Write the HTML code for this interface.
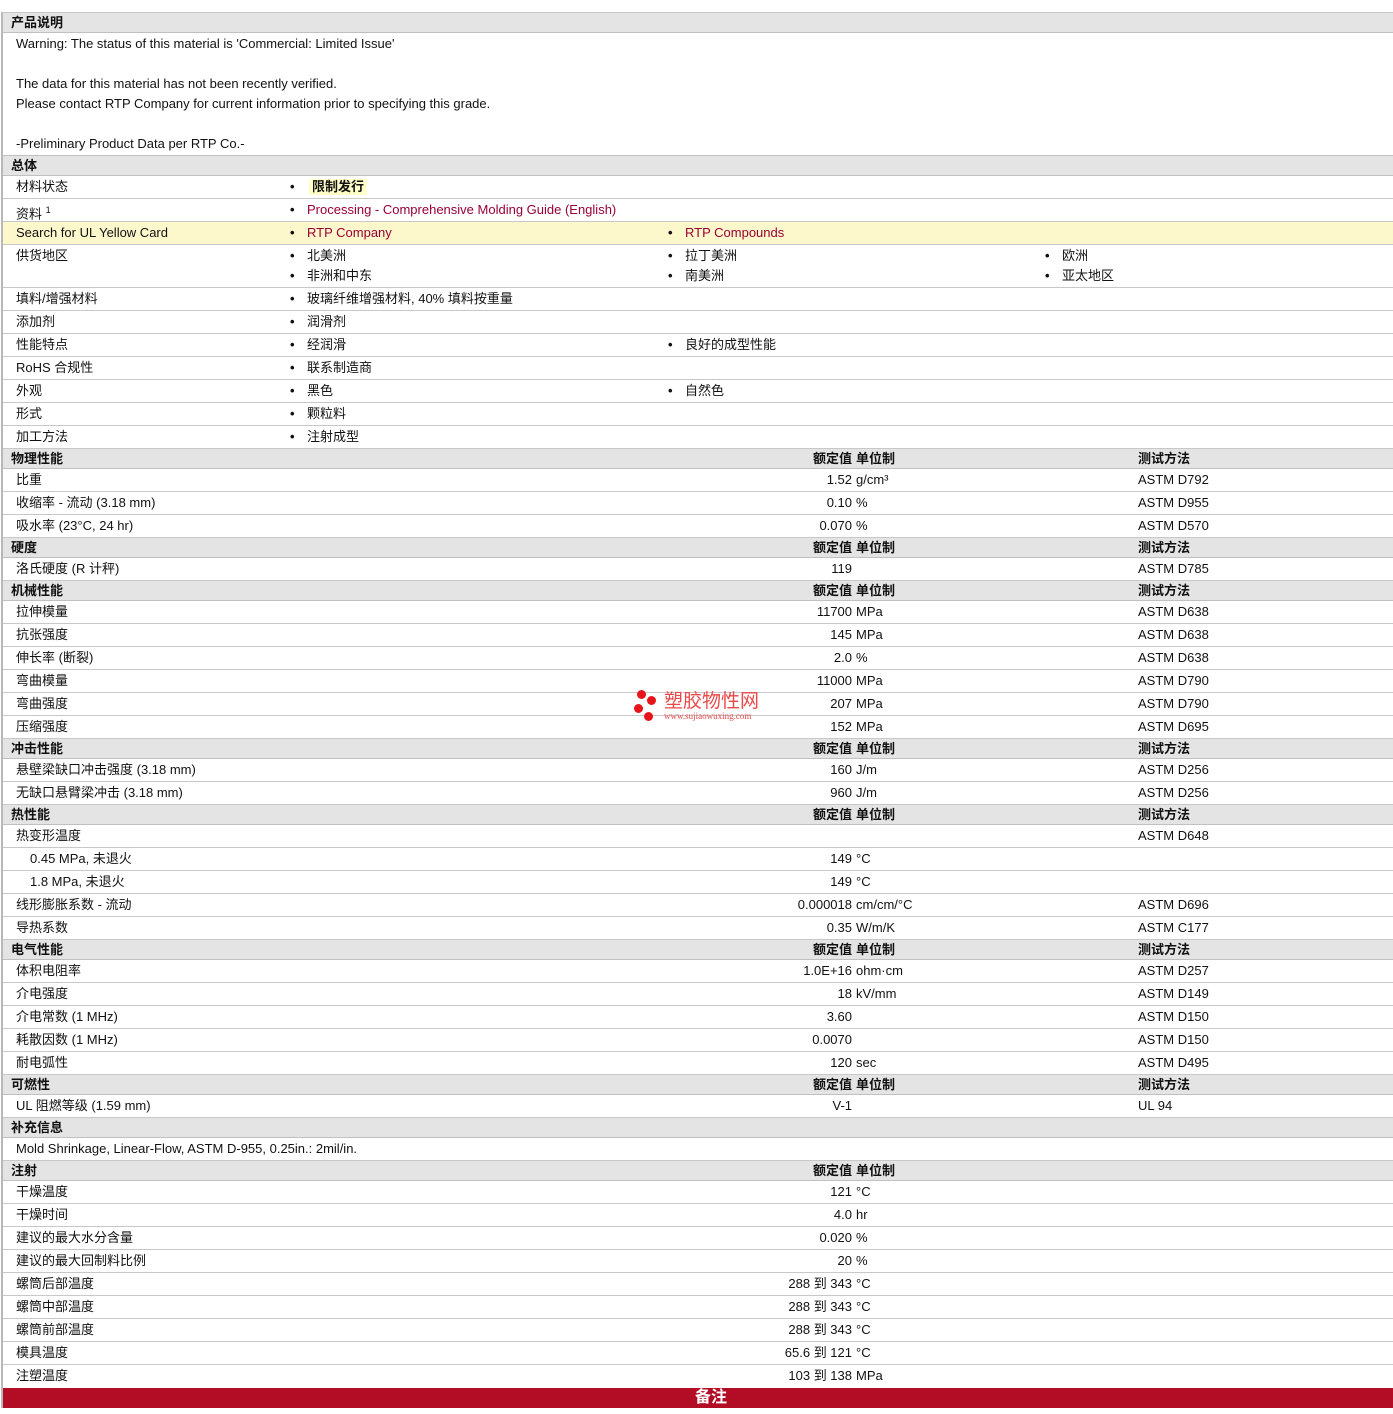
<!DOCTYPE html>
<html><head><meta charset="utf-8"><style>
*{margin:0;padding:0;box-sizing:border-box}
body{width:1393px;height:1414px;background:#fff;font-family:"Liberation Sans","Noto Sans CJK SC",sans-serif;font-size:13px;color:#111;position:relative;overflow:hidden}
#w{position:absolute;left:1px;top:12px;width:1392px;border-left:2px solid #b8b8b8;border-top:1px solid #c8c8c8}
.h{height:20px;line-height:20px;background:#e4e4e4;border-bottom:1px solid #c0c0c0;font-weight:bold;position:relative}
.h span{position:absolute}
.r{height:23px;line-height:22px;border-bottom:1px solid #c8c8c8;position:relative}
.r span{position:absolute;white-space:nowrap}
.l{left:13px}.v{right:541px;text-align:right}.u{left:853px}.m{left:1135px}
.b,.b2,.b3{font-weight:bold}
.b{left:287px}.b2{left:665px}.b3{left:1042px}
.t{left:304px}.t2{left:682px}.t3{left:1059px}
.hl{left:8px}.hv{right:541px}.hu{left:853px}.hm{left:1135px}
a{color:#990033;text-decoration:none}
.desc{height:123px;border-bottom:1px solid #c0c0c0;padding:1px 0 0 13px;line-height:20px}
</style></head><body>
<div id="w">
<div class="h"><span class="hl">产品说明</span></div>
<div class="desc">Warning: The status of this material is 'Commercial: Limited Issue'<br><br>The data for this material has not been recently verified.<br>Please contact RTP Company for current information prior to specifying this grade.<br><br>-Preliminary Product Data per RTP Co.-</div>
<div class="h"><span class="hl">总体</span></div>
<div class="r"><span class="l">材料状态</span><span class="b">•</span><span class="t" style="left:306px;background:#ffffc8;font-weight:bold;padding:0 3px;line-height:16px;top:3px">限制发行</span></div>
<div class="r"><span class="l">资料 <sup style="font-size:9px">1</sup></span><span class="b">•</span><span class="t"><a>Processing - Comprehensive Molding Guide (English)</a></span></div>
<div class="r" style="background:#fdf8cc"><span class="l">Search for UL Yellow Card</span><span class="b">•</span><span class="t"><a>RTP Company</a></span><span class="b2">•</span><span class="t2"><a>RTP Compounds</a></span></div>
<div class="r" style="height:43px"><span class="l">供货地区</span><span class="b">•</span><span class="t">北美洲</span><span class="b2">•</span><span class="t2">拉丁美洲</span><span class="b3">•</span><span class="t3">欧洲</span>
<span class="b" style="top:20px">•</span><span class="t" style="top:20px">非洲和中东</span><span class="b2" style="top:20px">•</span><span class="t2" style="top:20px">南美洲</span><span class="b3" style="top:20px">•</span><span class="t3" style="top:20px">亚太地区</span></div>
<div class="r"><span class="l">填料/增强材料</span><span class="b">•</span><span class="t">玻璃纤维增强材料, 40% 填料按重量</span></div>
<div class="r"><span class="l">添加剂</span><span class="b">•</span><span class="t">润滑剂</span></div>
<div class="r"><span class="l">性能特点</span><span class="b">•</span><span class="t">经润滑</span><span class="b2">•</span><span class="t2">良好的成型性能</span></div>
<div class="r"><span class="l">RoHS 合规性</span><span class="b">•</span><span class="t">联系制造商</span></div>
<div class="r"><span class="l">外观</span><span class="b">•</span><span class="t">黑色</span><span class="b2">•</span><span class="t2">自然色</span></div>
<div class="r"><span class="l">形式</span><span class="b">•</span><span class="t">颗粒料</span></div>
<div class="r"><span class="l">加工方法</span><span class="b">•</span><span class="t">注射成型</span></div>

<div class="h"><span class="hl">物理性能</span><span class="hv">额定值</span><span class="hu">单位制</span><span class="hm">测试方法</span></div>
<div class="r"><span class="l">比重</span><span class="v">1.52</span><span class="u">g/cm³</span><span class="m">ASTM D792</span></div>
<div class="r"><span class="l">收缩率 - 流动 (3.18 mm)</span><span class="v">0.10</span><span class="u">%</span><span class="m">ASTM D955</span></div>
<div class="r"><span class="l">吸水率 (23°C, 24 hr)</span><span class="v">0.070</span><span class="u">%</span><span class="m">ASTM D570</span></div>
<div class="h"><span class="hl">硬度</span><span class="hv">额定值</span><span class="hu">单位制</span><span class="hm">测试方法</span></div>
<div class="r"><span class="l">洛氏硬度 (R 计秤)</span><span class="v">119</span><span class="m">ASTM D785</span></div>
<div class="h"><span class="hl">机械性能</span><span class="hv">额定值</span><span class="hu">单位制</span><span class="hm">测试方法</span></div>
<div class="r"><span class="l">拉伸模量</span><span class="v">11700</span><span class="u">MPa</span><span class="m">ASTM D638</span></div>
<div class="r"><span class="l">抗张强度</span><span class="v">145</span><span class="u">MPa</span><span class="m">ASTM D638</span></div>
<div class="r"><span class="l">伸长率 (断裂)</span><span class="v">2.0</span><span class="u">%</span><span class="m">ASTM D638</span></div>
<div class="r"><span class="l">弯曲模量</span><span class="v">11000</span><span class="u">MPa</span><span class="m">ASTM D790</span></div>
<div class="r"><span class="l">弯曲强度</span><span class="v">207</span><span class="u">MPa</span><span class="m">ASTM D790</span></div>
<div class="r"><span class="l">压缩强度</span><span class="v">152</span><span class="u">MPa</span><span class="m">ASTM D695</span></div>
<div class="h"><span class="hl">冲击性能</span><span class="hv">额定值</span><span class="hu">单位制</span><span class="hm">测试方法</span></div>
<div class="r"><span class="l">悬壁梁缺口冲击强度 (3.18 mm)</span><span class="v">160</span><span class="u">J/m</span><span class="m">ASTM D256</span></div>
<div class="r"><span class="l">无缺口悬臂梁冲击 (3.18 mm)</span><span class="v">960</span><span class="u">J/m</span><span class="m">ASTM D256</span></div>
<div class="h"><span class="hl">热性能</span><span class="hv">额定值</span><span class="hu">单位制</span><span class="hm">测试方法</span></div>
<div class="r"><span class="l">热变形温度</span><span class="m">ASTM D648</span></div>
<div class="r"><span class="l" style="left:27px">0.45 MPa, 未退火</span><span class="v">149</span><span class="u">°C</span></div>
<div class="r"><span class="l" style="left:27px">1.8 MPa, 未退火</span><span class="v">149</span><span class="u">°C</span></div>
<div class="r"><span class="l">线形膨胀系数 - 流动</span><span class="v">0.000018</span><span class="u">cm/cm/°C</span><span class="m">ASTM D696</span></div>
<div class="r"><span class="l">导热系数</span><span class="v">0.35</span><span class="u">W/m/K</span><span class="m">ASTM C177</span></div>
<div class="h"><span class="hl">电气性能</span><span class="hv">额定值</span><span class="hu">单位制</span><span class="hm">测试方法</span></div>
<div class="r"><span class="l">体积电阻率</span><span class="v">1.0E+16</span><span class="u">ohm·cm</span><span class="m">ASTM D257</span></div>
<div class="r"><span class="l">介电强度</span><span class="v">18</span><span class="u">kV/mm</span><span class="m">ASTM D149</span></div>
<div class="r"><span class="l">介电常数 (1 MHz)</span><span class="v">3.60</span><span class="m">ASTM D150</span></div>
<div class="r"><span class="l">耗散因数 (1 MHz)</span><span class="v">0.0070</span><span class="m">ASTM D150</span></div>
<div class="r"><span class="l">耐电弧性</span><span class="v">120</span><span class="u">sec</span><span class="m">ASTM D495</span></div>
<div class="h"><span class="hl">可燃性</span><span class="hv">额定值</span><span class="hu">单位制</span><span class="hm">测试方法</span></div>
<div class="r"><span class="l">UL 阻燃等级 (1.59 mm)</span><span class="v">V-1</span><span class="m">UL 94</span></div>
<div class="h"><span class="hl">补充信息</span></div>
<div class="r"><span class="l">Mold Shrinkage, Linear-Flow, ASTM D-955, 0.25in.: 2mil/in.</span></div>
<div class="h"><span class="hl">注射</span><span class="hv">额定值</span><span class="hu">单位制</span></div>
<div class="r"><span class="l">干燥温度</span><span class="v">121</span><span class="u">°C</span></div>
<div class="r"><span class="l">干燥时间</span><span class="v">4.0</span><span class="u">hr</span></div>
<div class="r"><span class="l">建议的最大水分含量</span><span class="v">0.020</span><span class="u">%</span></div>
<div class="r"><span class="l">建议的最大回制料比例</span><span class="v">20</span><span class="u">%</span></div>
<div class="r"><span class="l">螺筒后部温度</span><span class="v">288 到 343</span><span class="u">°C</span></div>
<div class="r"><span class="l">螺筒中部温度</span><span class="v">288 到 343</span><span class="u">°C</span></div>
<div class="r"><span class="l">螺筒前部温度</span><span class="v">288 到 343</span><span class="u">°C</span></div>
<div class="r"><span class="l">模具温度</span><span class="v">65.6 到 121</span><span class="u">°C</span></div>
<div class="r" style="border-bottom:none"><span class="l">注塑温度</span><span class="v">103 到 138</span><span class="u">MPa</span></div>
<div style="height:20px;background:#b30c25;color:#fff;text-align:center;font-size:16px;line-height:20px;font-weight:bold;padding-left:26px">备注</div>
</div>
<div style="position:absolute;left:637px;top:690px;width:9px;height:9px;border-radius:50%;background:#e8141b"></div>
<div style="position:absolute;left:647px;top:696px;width:9px;height:9px;border-radius:50%;background:#e8141b"></div>
<div style="position:absolute;left:634px;top:704px;width:9px;height:9px;border-radius:50%;background:#e8141b"></div>
<div style="position:absolute;left:644px;top:712px;width:9px;height:9px;border-radius:50%;background:#e8141b"></div>
<div style="position:absolute;left:664px;top:691px;color:#e84a4a;font-size:19px;line-height:21px">塑胶物性网</div>
<div style="position:absolute;left:664px;top:712px;color:#e84a4a;font-size:9px;font-family:'Liberation Serif',serif;line-height:9px">www.sujiaowuxing.com</div>
</body></html>
